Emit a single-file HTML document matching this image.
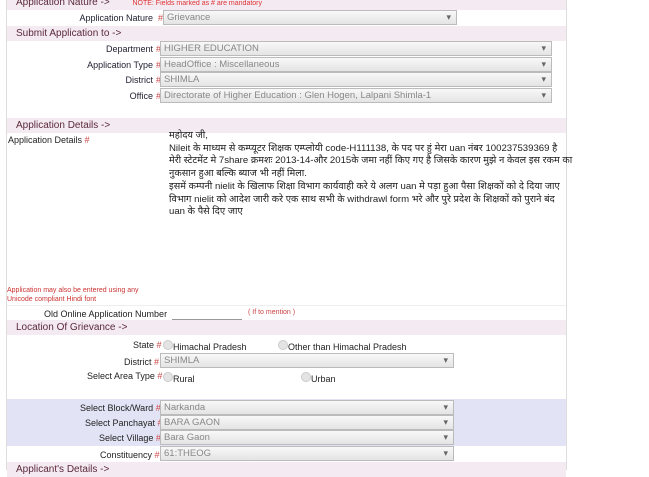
<!DOCTYPE html>
<html><head><meta charset="utf-8"><style>
body{margin:0;width:649px;height:470px;background:#fff;font-family:"Liberation Sans",sans-serif;position:relative;overflow:hidden}
.c{position:absolute;left:6px;top:0;width:559px;height:470px;border-left:1px solid #ddd;border-right:1px solid #ddd}
.a{position:absolute}
.h{position:absolute;left:7px;width:559px;height:15px;background:#f4eaf2;font-size:10px;color:#5a2a3a;line-height:15px;padding-left:9px;box-sizing:border-box}
.l{position:absolute;font-size:9px;color:#223;text-align:right;width:150px;left:3px}
.s{position:absolute;font-size:9px;color:#c44}
.sel{position:absolute;height:13px;border:1px solid #bbb;background:linear-gradient(#f8f8f8,#e4e4e4);font-size:9.5px;color:#888;line-height:13px;padding-left:3px;box-sizing:content-box}
.sel:after{content:"▾";position:absolute;right:5px;top:0;font-size:9px;color:#666}
.hi{position:absolute;left:169px;top:130px;width:420px;white-space:nowrap;font-family:"Liberation Sans","Noto Sans CJK SC",sans-serif;font-size:9.6px;color:#222;line-height:12.7px}
.r{position:absolute;width:8px;height:8px;border-radius:50%;background:#e4e4e4;border:1px solid #ccc}
.t{position:absolute;font-size:9px;color:#222}
</style></head><body>
<div class="c"></div>
<div class="h" style="top:-5px">Application Nature -&gt; <span style="font-size:7px;color:#d33;margin-left:20px">NOTE: Fields marked as # are mandatory</span></div>
<div class="l" style="top:13px">Application Nature</div><div class="s" style="left:158px;top:13px">#</div>
<div class="sel" style="left:163px;top:10px;width:289px">Grievance</div>
<div class="h" style="top:26px">Submit Application to -&gt;</div>
<div class="l" style="top:44px">Department</div><div class="s" style="left:156px;top:44px">#</div>
<div class="sel" style="left:160px;top:41px;width:387px">HIGHER EDUCATION</div>
<div class="l" style="top:60px">Application Type</div><div class="s" style="left:156px;top:60px">#</div>
<div class="sel" style="left:160px;top:57px;width:387px">HeadOffice : Miscellaneous</div>
<div class="l" style="top:75px">District</div><div class="s" style="left:156px;top:75px">#</div>
<div class="sel" style="left:160px;top:72px;width:387px">SHIMLA</div>
<div class="l" style="top:91px">Office</div><div class="s" style="left:156px;top:91px">#</div>
<div class="sel" style="left:160px;top:88px;width:387px">Directorate of Higher Education : Glen Hogen, Lalpani Shimla-1</div>
<div class="h" style="top:118px">Application Details -&gt;</div>
<div class="t" style="left:8px;top:135px">Application Details <span style="color:#c44">#</span></div>
<div class="hi">महोदय जी,<br>Nileit के माध्यम से कम्प्यूटर शिक्षक एम्प्लोयी code-H111138, के पद पर हुं मेरा uan नंबर 100237539369 है<br>मेरी स्टेटमेंट मे 7share क्रमशः 2013-14-और 2015के जमा नहीं किए गए है जिसके कारण मुझे न केवल इस रकम का<br>नुकसान हुआ बल्कि ब्याज भी नहीं मिला.<br>इसमें कम्पनी nielit के खिलाफ शिक्षा विभाग कार्यवाही करे ये अलग uan मे पड़ा हुआ पैसा शिक्षकों को दे दिया जाए<br>विभाग nielit को आदेश जारी करे एक साथ सभी के withdrawl form भरे और पुरे प्रदेश के शिक्षकों को पुराने बंद<br>uan के पैसे दिए जाए</div>
<div class="a" style="left:7px;top:286px;font-size:7px;color:#c33;line-height:9px">Application may also be entered using any<br>Unicode compliant Hindi font</div>
<div class="a" style="left:7px;top:305px;width:559px;border-top:1px solid #eee"></div>
<div class="t" style="left:44px;top:309px">Old Online Application Number</div>
<div class="a" style="left:172px;top:305px;width:70px;height:14px;border-bottom:1px solid #999"></div>
<div class="a" style="left:248px;top:309px;font-size:7px;color:#c44">( If to mention )</div>
<div class="h" style="top:320px">Location Of Grievance -&gt;</div>
<div class="t" style="left:133px;top:340px">State <span style="color:#c44">#</span></div>
<div class="r" style="left:163px;top:340px"></div><div class="t" style="left:173px;top:342px">Himachal Pradesh</div>
<div class="r" style="left:278px;top:340px"></div><div class="t" style="left:288px;top:342px">Other than Himachal Pradesh</div>
<div class="t" style="left:124px;top:357px">District <span style="color:#c44">#</span></div>
<div class="sel" style="left:160px;top:353px;width:289px">SHIMLA</div>
<div class="t" style="left:87px;top:371px">Select Area Type <span style="color:#c44">#</span></div>
<div class="r" style="left:163px;top:372px"></div><div class="t" style="left:173px;top:374px">Rural</div>
<div class="r" style="left:301px;top:372px"></div><div class="t" style="left:311px;top:374px">Urban</div>
<div class="a" style="left:7px;top:399px;width:559px;height:47px;background:#e2e3f5"></div>
<div class="t" style="left:80px;top:403px">Select Block/Ward <span style="color:#c44">#</span></div>
<div class="sel" style="left:160px;top:400px;width:289px">Narkanda</div>
<div class="t" style="left:85px;top:418px">Select Panchayat <span style="color:#c44">#</span></div>
<div class="sel" style="left:160px;top:415px;width:289px">BARA GAON</div>
<div class="t" style="left:99px;top:433px">Select Village <span style="color:#c44">#</span></div>
<div class="sel" style="left:160px;top:430px;width:289px">Bara Gaon</div>
<div class="t" style="left:100px;top:450px">Constituency <span style="color:#c44">#</span></div>
<div class="sel" style="left:160px;top:446px;width:289px">61:THEOG</div>
<div class="h" style="top:462px">Applicant's Details -&gt;</div>
</body></html>
